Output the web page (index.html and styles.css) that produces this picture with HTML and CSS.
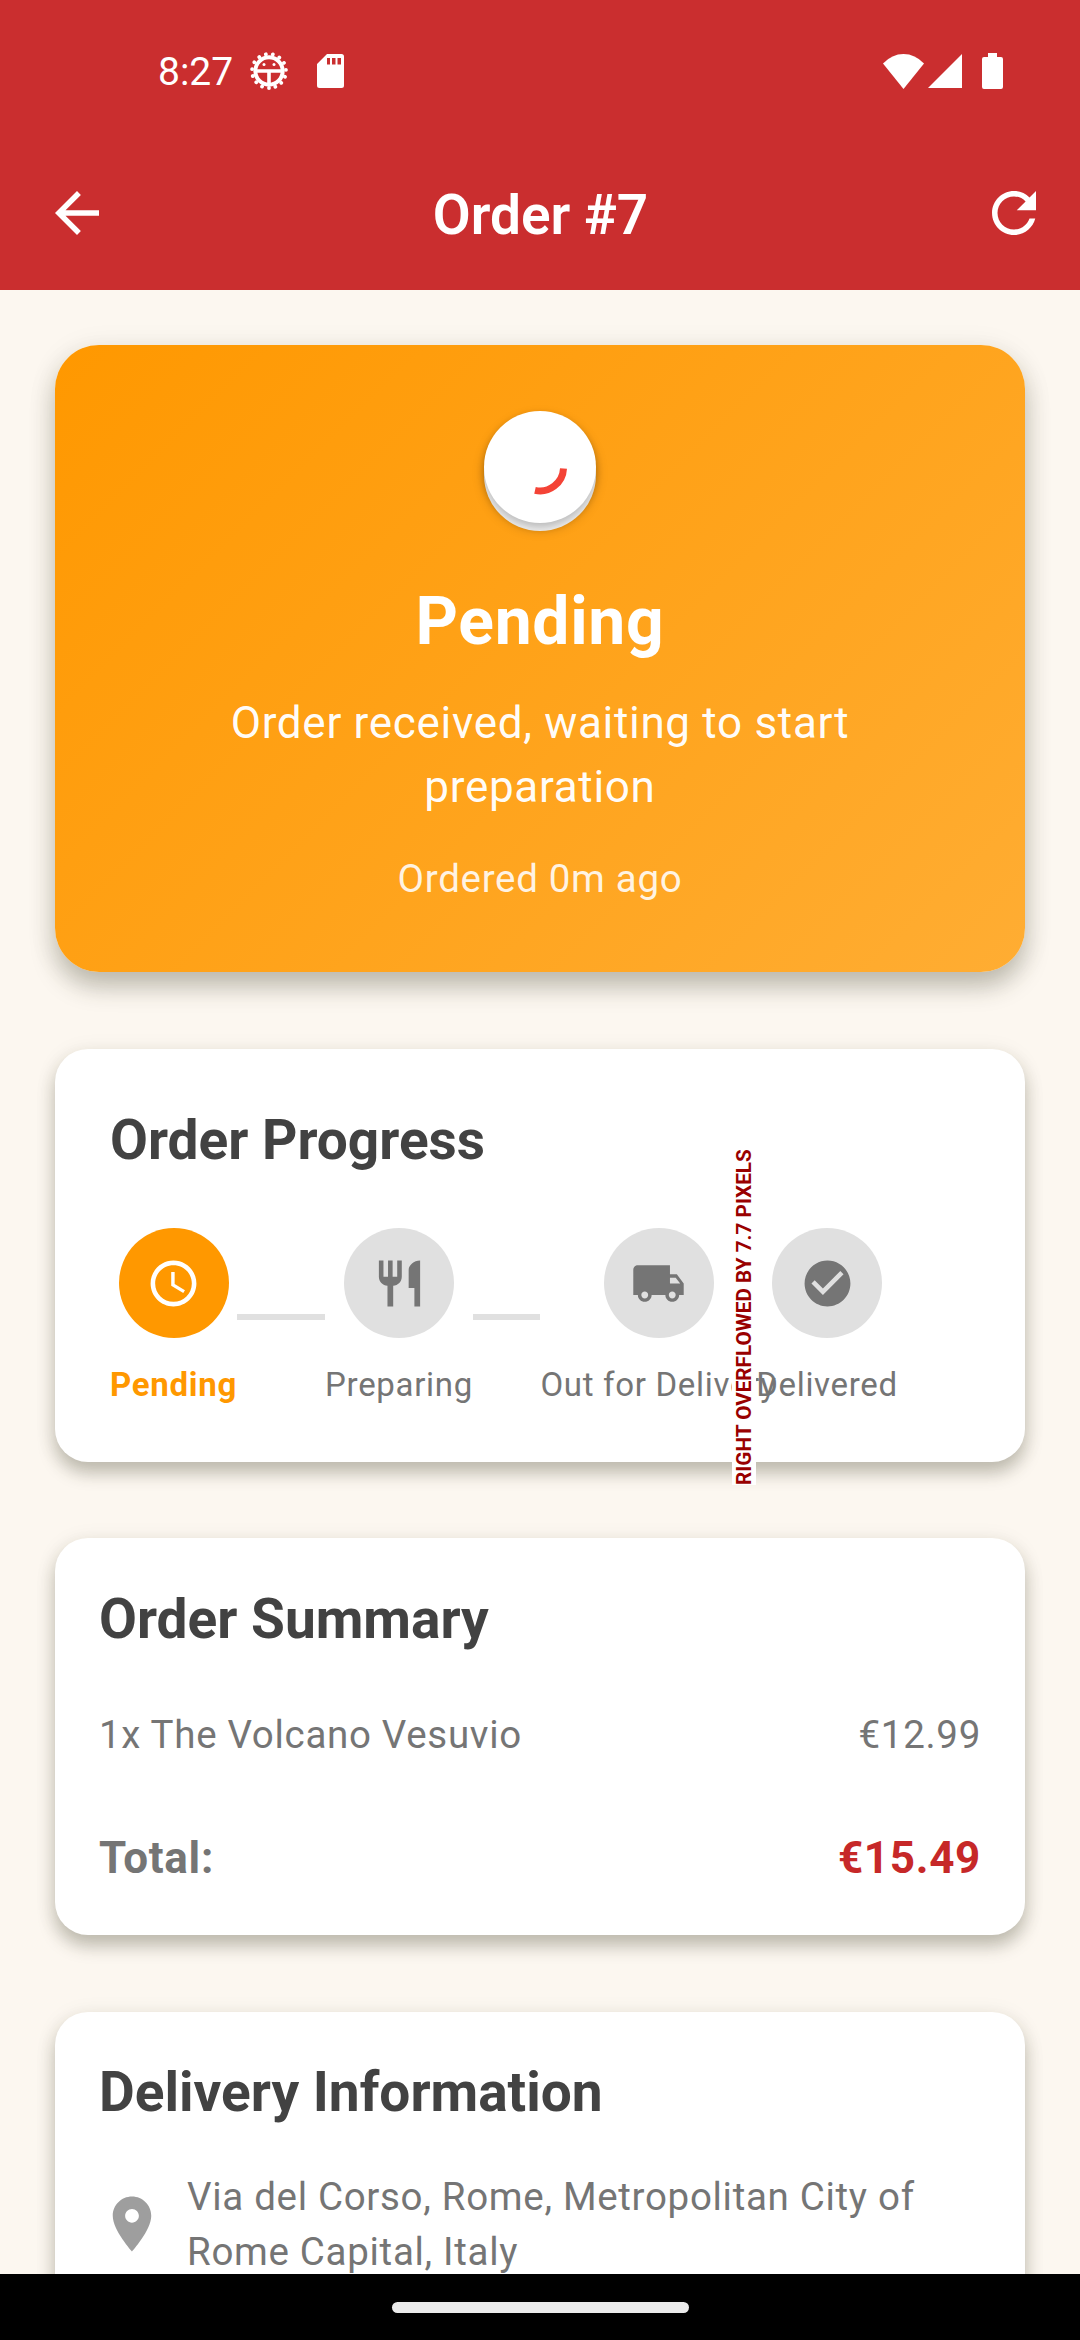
FILE: index.html
```html
<!DOCTYPE html>
<html lang="en">
<head>
<meta charset="utf-8">
<title>Order #7</title>
<link rel="stylesheet" href="styles.css">
</head>
<body>
<div class="screen">
  <header class="header">
    <div class="status-bar">
      <span class="clock">8:27</span>
      <svg class="icon-bug" viewBox="0 0 38 38">
        <circle cx="19" cy="19" r="13.700" fill="none" stroke="#fff" stroke-width="4"/>
        <circle cx="19" cy="19" r="17" fill="none" stroke="#fff" stroke-width="3.800" stroke-linecap="round" stroke-dasharray="0.010 7.111" transform="rotate(90 19 19)"/>
        <path d="M6 17.300h26v3.400H20.800v12h-3.600v-12H6z" fill="#fff"/>
        <circle cx="14" cy="12.500" r="1.500" fill="#fff"/><circle cx="24" cy="12.500" r="1.500" fill="#fff"/>
      </svg>
      <svg class="icon-sd" viewBox="0 0 27 34"><path fill="#fff" fill-rule="evenodd" d="M10 0H24.500Q27 0 27 2.500V31.500Q27 34 24.500 34H2.500Q0 34 0 31.500V10ZM10 4V10.500H13V4ZM15 4V10.500H18.500V4ZM20.500 4V10.500H24V4Z"/></svg>
      <span class="status-spacer"></span>
      <svg class="icon-wifi" viewBox="0 0 41 35"><path fill="#fff" d="M0 9.500Q9 0 20.500 0T41 9.500L20.500 35Z"/></svg>
      <svg class="icon-signal" viewBox="0 0 34 34"><path fill="#fff" d="M34 0V34H0Z"/></svg>
      <svg class="icon-battery" viewBox="0 0 21 36"><path fill="#fff" d="M6 0H15V4H19Q21 4 21 6V34Q21 36 19 36H2Q0 36 0 34V6Q0 4 2 4H6Z"/></svg>
    </div>
    <div class="app-bar">
      <svg class="icon" viewBox="0 0 24 24"><path fill="#fff" d="M20 11H7.830l5.590-5.590L12 4l-8 8 8 8 1.410-1.410L7.830 13H20v-2z"/></svg>
      <h1 class="title">Order #7</h1>
      <svg class="icon" viewBox="0 0 24 24"><path fill="#fff" d="M17.650 6.350C16.200 4.900 14.210 4 12 4c-4.420 0-7.990 3.580-7.990 8s3.570 8 7.990 8c3.730 0 6.840-2.550 7.730-6h-2.080c-.820 2.330-3.040 4-5.650 4-3.310 0-6-2.690-6-6s2.690-6 6-6c1.660 0 3.140.690 4.220 1.780L13 11h7V4l-2.350 2.350z"/></svg>
    </div>
  </header>

  <main class="content">
    <section class="card hero">
      <div class="spinner">
        <svg viewBox="0 0 112 112"><path d="M79.500 57.500A23.500 23.500 0 0 1 51 79.300" fill="none" stroke="#f44336" stroke-width="7"/></svg>
      </div>
      <h2 class="hero-title">Pending</h2>
      <p class="hero-text">Order received, waiting to start<br>preparation</p>
      <p class="hero-time">Ordered 0m ago</p>
    </section>

    <section class="card progress">
      <h2 class="heading">Order Progress</h2>
      <div class="steps">
        <div class="step active">
          <div class="dot"><svg viewBox="0 0 24 24"><path d="M11.990 2C6.470 2 2 6.480 2 12s4.470 10 9.990 10C17.520 22 22 17.520 22 12S17.520 2 11.990 2zM12 20c-4.420 0-8-3.580-8-8s3.580-8 8-8 8 3.580 8 8-3.580 8-8 8zm.5-13H11v6l5.250 3.150.750-1.230-4.500-2.670z"/></svg></div>
          <span class="label">Pending</span>
        </div>
        <div class="line"></div>
        <div class="step">
          <div class="dot"><svg viewBox="0 0 24 24"><path d="M11 9H9V2H7v7H5V2H3v7c0 2.120 1.660 3.840 3.750 3.970V22h2.500v-9.030C11.340 12.840 13 11.120 13 9V2h-2v7zm5-3v8h2.500v8H21V2c-2.760 0-5 2.240-5 4z"/></svg></div>
          <span class="label">Preparing</span>
        </div>
        <div class="line"></div>
        <div class="step step-wide">
          <div class="dot"><svg viewBox="0 0 24 24"><path d="M20 8h-3V4H3c-1.100 0-2 .900-2 2v11h2c0 1.660 1.340 3 3 3s3-1.340 3-3h6c0 1.660 1.340 3 3 3s3-1.340 3-3h2v-5l-3-4zM6 18.500c-.830 0-1.500-.670-1.500-1.500s.670-1.500 1.500-1.500 1.500.670 1.500 1.500-.670 1.500-1.500 1.500zm13.500-9l1.960 2.500H17V9.500h2.500zm-1.500 9c-.830 0-1.500-.670-1.500-1.500s.670-1.500 1.500-1.500 1.500.670 1.500 1.500-.670 1.500-1.500 1.500z"/></svg></div>
          <span class="label">Out for Delivery</span>
          <span class="overflow-flag">RIGHT OVERFLOWED BY 7.7 PIXELS</span>
        </div>
        <div class="step">
          <div class="dot"><svg viewBox="0 0 24 24"><path d="M12 2C6.480 2 2 6.480 2 12s4.480 10 10 10 10-4.480 10-10S17.520 2 12 2zm-2 15l-5-5 1.410-1.410L10 14.170l7.590-7.590L19 8l-9 9z"/></svg></div>
          <span class="label">Delivered</span>
        </div>
      </div>
    </section>

    <section class="card summary">
      <h2 class="heading">Order Summary</h2>
      <div class="row item"><span>1x The Volcano Vesuvio</span><span>€12.99</span></div>
      <div class="row total"><span class="total-label">Total:</span><span class="price">€15.49</span></div>
    </section>

    <section class="card delivery">
      <h2 class="heading">Delivery Information</h2>
      <div class="address">
        <svg class="icon" viewBox="0 0 24 24"><path fill="#9e9e9e" d="M12 2C8.130 2 5 5.130 5 9c0 5.250 7 13 7 13s7-7.750 7-13c0-3.870-3.130-7-7-7zm0 9.500c-1.380 0-2.500-1.120-2.500-2.500s1.120-2.500 2.500-2.500 2.500 1.120 2.500 2.500-1.120 2.500-2.500 2.500z"/></svg>
        <p class="address-text">Via del Corso, Rome, Metropolitan City of<br>Rome Capital, Italy</p>
      </div>
    </section>
  </main>
  <footer class="nav-bar"><div class="handle"></div></footer>
</div>
</body>
</html>
```
FILE: styles.css
```css
* { box-sizing: border-box; margin: 0; padding: 0; }
body { font-family: Roboto, sans-serif; background: #fcf7f0; }
svg { display: block; flex: none; }
.screen { width: 1080px; height: 2340px; display: flex; flex-direction: column; overflow: hidden; }

.header { height: 290px; flex: none; background: #ca2e2f; color: #fff; }
.status-bar { height: 136px; padding: 6px 77px 0 158px; display: flex; align-items: center; }
.clock { font-size: 39px; line-height: 46px; width: 92px; padding-top: 2px; white-space: nowrap; }
.icon-bug { width: 38px; height: 38px; }
.icon-sd { width: 27px; height: 34px; margin-left: 29px; }
.status-spacer { flex: 1; }
.icon-wifi { width: 41px; height: 35px; margin-right: 4px; }
.icon-signal { width: 34px; height: 34px; margin-right: 20px; }
.icon-battery { width: 21px; height: 36px; }
.app-bar { height: 154px; padding: 0 33px 0 44px; display: flex; align-items: center; justify-content: space-between; }
.icon { width: 66px; height: 66px; }
.title { font-size: 55px; font-weight: 600; line-height: 70px; margin-left: -10px; padding-top: 3px; }

.content { flex: 1; min-height: 0; overflow: hidden; padding: 55px 55px 0; display: flex; flex-direction: column; gap: 77px; }
.card { flex: none; background: #fff; border-radius: 33px; box-shadow: 0 11px 17px rgba(50, 50, 30, .28), 0 3px 22px rgba(50, 50, 30, .08); }
.heading { font-size: 55px; font-weight: 700; line-height: 72px; color: #424242; }

.hero { height: 627px; padding-top: 66px; border-radius: 44px; background: linear-gradient(135deg, #ff9800, #ffad33); box-shadow: 0 15px 24px rgba(50, 50, 30, .28), 0 4px 30px rgba(50, 50, 30, .08); display: flex; flex-direction: column; align-items: center; text-align: center; color: #fff; }
.spinner { width: 112px; height: 112px; border-radius: 50%; background: #fff; box-shadow: 0 4px 7px rgba(0, 0, 0, .2), 0 8px 0 #ebebeb, 0 6px 12px rgba(0, 0, 0, .25); }
.hero-title { margin-top: 55px; font-size: 66px; font-weight: 700; line-height: 88px; letter-spacing: .690px; }
.hero-text { margin-top: 25px; font-size: 44px; line-height: 64px; letter-spacing: .690px; color: rgba(255, 255, 255, .97); }
.hero-time { margin-top: 32px; font-size: 38.500px; line-height: 55px; letter-spacing: .690px; color: rgba(255, 255, 255, .88); }

.progress { height: 413px; padding: 55px; }
.steps { margin-top: 52px; display: grid; grid-template-columns: 127px 88px 148px 67px 216px 142px; }
.step { display: flex; flex-direction: column; align-items: center; }
.dot { width: 110px; height: 110px; border-radius: 50%; background: #e0e0e0; display: grid; place-items: center; }
.dot svg { width: 55px; height: 55px; fill: #757575; }
.label { margin-top: 23px; font-size: 33px; line-height: 47px; letter-spacing: .690px; white-space: nowrap; color: #757575; }
.active .dot { background: #ff9800; }
.active .dot svg { fill: #fff; }
.active .label { color: #ff9800; font-weight: 700; }
.line { height: 6px; margin-top: 86px; background: #e0e0e0; }
.step-wide { position: relative; margin-right: -21px; }
.overflow-flag { position: absolute; left: 192px; top: -81px; width: 24px; height: 338px; padding-bottom: 1px; writing-mode: vertical-rl; transform: rotate(180deg); background: #fff; color: #900; font-size: 20.700px; font-weight: 700; line-height: 24px; white-space: nowrap; }

.summary { height: 397px; margin-top: -1px; padding: 45px 44px; }
.row { display: flex; justify-content: space-between; }
.item { margin-top: 52px; font-size: 38.500px; line-height: 55px; letter-spacing: .690px; color: #757575; }
.total { margin-top: 65px; font-size: 44px; line-height: 63px; font-weight: 700; letter-spacing: .690px; }
.total-label { color: #757575; }
.price { color: #c62828; }

.delivery { height: 420px; padding: 44px; }
.address { margin-top: 41px; display: flex; align-items: center; }
.address-text { margin-left: 22px; font-size: 38.500px; line-height: 55px; letter-spacing: .690px; color: #757575; white-space: nowrap; }
.nav-bar { flex: none; height: 66px; background: #000; display: flex; justify-content: center; align-items: center; }
.handle { width: 297px; height: 11px; border-radius: 6px; background: #ebebeb; }
```
